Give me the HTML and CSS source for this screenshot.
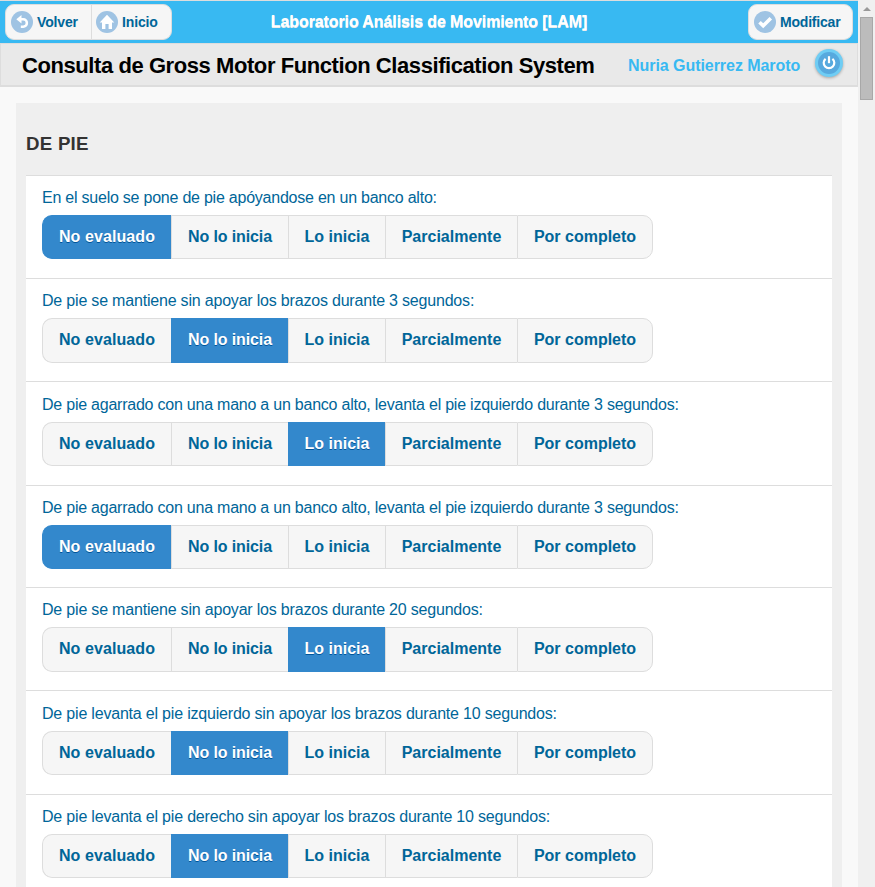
FILE: index.html
```html
<!DOCTYPE html>
<html lang="es">
<head>
<meta charset="utf-8">
<title>Laboratorio Análisis de Movimiento [LAM]</title>
<link rel="stylesheet" href="styles.css">
</head>
<body>
<div class="window">
  <div class="page">
    <header class="header">
      <nav class="btn-group">
        <a class="btn"><svg class="icon" viewBox="0 0 22 22"><circle cx="11" cy="11" r="11" fill="#9fc3e3"/><path d="M5.300 8.300 10.500 4v8.600z" fill="#fff"/><path d="M9 8.300h3.200a3.500 3.500 0 0 1 0 7.400H9.800" fill="none" stroke="#fff" stroke-width="2.500"/></svg><span>Volver</span></a>
        <a class="btn"><svg class="icon" viewBox="0 0 22 22"><circle cx="11" cy="11" r="11" fill="#9fc3e3"/><path d="M11 3.800 18.300 11.500H16V18H12.600v-5H9.400v5H6v-6.500H3.700z" fill="#fff"/></svg><span>Inicio</span></a>
      </nav>
      <h1 class="title">Laboratorio Análisis de Movimiento [LAM]</h1>
      <div class="btn-group right">
        <a class="btn"><svg class="icon" viewBox="0 0 22 22"><circle cx="11" cy="11" r="11" fill="#9fc3e3"/><path d="M5.500 11.300 9.200 14.800 16.800 7.300" fill="none" stroke="#fff" stroke-width="3.600"/></svg><span>Modificar</span></a>
      </div>
    </header>
    <div class="subheader">
      <h2 class="heading">Consulta de Gross Motor Function Classification System</h2>
      <span class="user">Nuria Gutierrez Maroto</span>
      <span class="power"><svg viewBox="0 0 22 22"><circle cx="11" cy="11" r="11" fill="#57a9de"/><path d="M7.600 6.800a5.300 5.300 0 1 0 6.800 0" fill="none" stroke="#fff" stroke-width="2.200"/><path d="M11 4.200v7" stroke="#fff" stroke-width="2.200"/></svg></span>
    </div>
    <main class="panel">
      <h3 class="section">DE PIE</h3>
      <div class="list">
        <div class="row"><p class="q tight">En el suelo se pone de pie apóyandose en un banco alto:</p>
          <div class="seg"><span class="on">No evaluado</span><span>No lo inicia</span><span>Lo inicia</span><span>Parcialmente</span><span>Por completo</span></div></div>
        <div class="row"><p class="q">De pie se mantiene sin apoyar los brazos durante 3 segundos:</p>
          <div class="seg tall"><span>No evaluado</span><span class="on">No lo inicia</span><span>Lo inicia</span><span>Parcialmente</span><span>Por completo</span></div></div>
        <div class="row low"><p class="q tight">De pie agarrado con una mano a un banco alto, levanta el pie izquierdo durante 3 segundos:</p>
          <div class="seg"><span>No evaluado</span><span>No lo inicia</span><span class="on">Lo inicia</span><span>Parcialmente</span><span>Por completo</span></div></div>
        <div class="row"><p class="q tight">De pie agarrado con una mano a un banco alto, levanta el pie izquierdo durante 3 segundos:</p>
          <div class="seg"><span class="on">No evaluado</span><span>No lo inicia</span><span>Lo inicia</span><span>Parcialmente</span><span>Por completo</span></div></div>
        <div class="row"><p class="q">De pie se mantiene sin apoyar los brazos durante 20 segundos:</p>
          <div class="seg tall"><span>No evaluado</span><span>No lo inicia</span><span class="on">Lo inicia</span><span>Parcialmente</span><span>Por completo</span></div></div>
        <div class="row low"><p class="q">De pie levanta el pie izquierdo sin apoyar los brazos durante 10 segundos:</p>
          <div class="seg"><span>No evaluado</span><span class="on">No lo inicia</span><span>Lo inicia</span><span>Parcialmente</span><span>Por completo</span></div></div>
        <div class="row"><p class="q">De pie levanta el pie derecho sin apoyar los brazos durante 10 segundos:</p>
          <div class="seg"><span>No evaluado</span><span class="on">No lo inicia</span><span>Lo inicia</span><span>Parcialmente</span><span>Por completo</span></div></div>
      </div>
    </main>
  </div>
  <div class="scrollbar"><span class="arrow"></span><span class="thumb"></span></div>
</div>
</body>
</html>
```

FILE: styles.css
```css
* { box-sizing: border-box; }
body { margin: 0; overflow: hidden; font-family: "Liberation Sans", Arial, sans-serif; font-size: 16px; background: #f9f9f9; color: #333; }
h1, h2, h3, p { margin: 0; white-space: nowrap; }
.window { display: flex; height: 887px; overflow: hidden; }
.page { width: 858px; height: 887px; overflow: hidden; }
.header { display: grid; grid-template-columns: 1fr auto 1fr; height: 43px; padding: 3px 5px 0; border-top: 1px solid #ddd; background: #38b9f2; }
.btn-group { display: flex; justify-self: start; height: 36px; border: 1px solid #ddd; border-radius: 9px; background: #f6f6f6; overflow: hidden; }
.right { width: 105px; justify-self: end; }
.btn { display: flex; align-items: center; gap: 4px; width: 85px; padding-left: 5px; font-size: 14px; font-weight: bold; color: #069; letter-spacing: -0.15px; text-shadow: 0 1px 0 #f3f3f3; line-height: 34px; }
.btn + .btn { width: 80px; border-left: 1px solid #ddd; padding-left: 4px; }
.right .btn { width: 103px; letter-spacing: -0.2px; }
.icon { width: 22px; height: 22px; display: block; flex: none; }
.title { font-size: 16px; line-height: 36px; letter-spacing: -0.1px; color: #fff; text-shadow: 0 1px 0 #eee; }
.subheader { display: flex; height: 44px; border: 1px solid #ddd; border-bottom-width: 2px; background: #e9e9e9; padding-left: 21px; }
.heading { width: 606px; font-size: 22px; line-height: 43px; letter-spacing: -0.425px; color: #000; }
.user { width: 187px; font-size: 16px; font-weight: bold; line-height: 43px; letter-spacing: -0.05px; color: #38b9f2; white-space: nowrap; }
.power { width: 28px; height: 28px; margin-top: 5px; padding: 3px; border-radius: 50%; background: #6fcdf4; box-shadow: 0 1px 3px rgba(0,0,0,.3); }
.power svg { display: block; width: 22px; height: 22px; }
.panel { margin: 16px 16px 0; padding: 0 10px; height: 800px; background: #efefef; }
.section { height: 72px; font-size: 18.7px; line-height: 82px; letter-spacing: 0.25px; color: #333; }
.list { display: grid; grid-template-rows: 103px 103px 104px 102px 103px 104px 103px; background: #fff; }
.row { border-top: 1px solid #ddd; padding: 12px 16px 0; }
.row.low { padding-top: 13px; }
.q { height: 27px; line-height: 20px; letter-spacing: -0.195px; color: #069; }
.q.tight { letter-spacing: -0.23px; }
.seg { display: grid; grid-template-columns: 129px 117px 97px 132px 136px; width: 611px; height: 44px; border-radius: 10px; }
.seg.tall { height: 45px; }
.seg span { border: 1px solid #ddd; border-right: 0; background: #f6f6f6; color: #069; font-weight: bold; text-align: center; line-height: 42px; text-shadow: 0 1px 0 #f3f3f3; white-space: nowrap; }
.seg span:first-child { border-radius: 10px 0 0 10px; letter-spacing: 0.1px; }
.seg span:nth-child(2) { letter-spacing: -0.12px; }
.seg span:last-child { border-right: 1px solid #ddd; border-radius: 0 10px 10px 0; }
.seg .on { background: #38c; border-color: #38c; color: #fff; text-shadow: 0 1px 0 #059; }
.scrollbar { width: 17px; background: #f0f0f0; padding: 7px 2px 0; }
.arrow { display: block; width: 0; margin: 0 auto 6px 3px; border: 4px solid transparent; border-top: 0; border-bottom-color: #999; }
.thumb { display: block; width: 13px; height: 83px; border: 1px solid #a8a8a8; background: #bcbcbc; }
```
